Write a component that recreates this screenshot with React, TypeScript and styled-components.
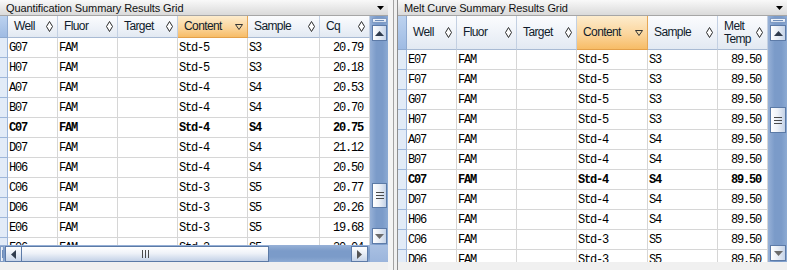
import React from "react";
import styled, { createGlobalStyle, css } from "styled-components";

const Global = createGlobalStyle`
  html, body { margin: 0; padding: 0; background: #f0f0f0; }
  body { width: 787px; height: 270px; overflow: hidden; }
`;

const Page = styled.div`
  display: flex;
  width: 787px;
  height: 270px;
  background: #f0f0f0;
  font-family: "Liberation Sans", Arial, sans-serif;
  overflow: hidden;
`;

const Panel = styled.div<{ $w: number; $framed?: boolean }>`
  width: ${(p) => p.$w}px;
  flex-shrink: 0;
  display: flex;
  flex-direction: column;
  box-sizing: border-box;
  ${(p) =>
    p.$framed &&
    css`
      border-left: 1px solid #8e8e8e;
    `}
`;

const Splitter = styled.div`
  width: 9px;
  flex-shrink: 0;
  background: linear-gradient(to right, #f4f4f4 0, #f4f4f4 5px, #a3a3a3 5px, #a3a3a3 6px, #f0f0f0 6px);
`;

const TitleBar = styled.div`
  height: 15px;
  border-bottom: 1px solid #a6a6a6;
  background: linear-gradient(#f9f9f9, #e6e6e6 60%, #dadada);
  display: flex;
  align-items: center;
  justify-content: space-between;
  padding: 0 4px 0 6px;
  font-size: 11px;
  letter-spacing: -0.1px;
  color: #111;
  white-space: nowrap;
`;

const Body = styled.div<{ $h: number }>`
  display: flex;
  height: ${(p) => p.$h}px;
  flex-shrink: 0;
`;

const GridArea = styled.div<{ $w: number }>`
  width: ${(p) => p.$w}px;
  flex-shrink: 0;
  overflow: hidden;
  background: #fff;
`;

const HeaderRow = styled.div<{ $cols: string; $h: number }>`
  display: grid;
  grid-template-columns: ${(p) => p.$cols};
  height: ${(p) => p.$h}px;
`;

const HeaderCorner = styled.div`
  background: linear-gradient(#bcd2ef, #9fbbe3);
  border-right: 1px solid #8ea9d0;
  border-bottom: 1px solid #8ea9d0;
`;

const HeaderCell = styled.div<{ $active?: boolean }>`
  box-sizing: border-box;
  display: flex;
  align-items: center;
  justify-content: space-between;
  padding: 0 4px 0 6px;
  background: linear-gradient(#fbfcfe, #eef2f8 55%, #e2e9f2);
  border-right: 1px solid #c3d0e2;
  border-bottom: 1px solid #a8bad3;
  font-size: 12px;
  letter-spacing: -0.6px;
  line-height: 13px;
  color: #101c2c;
  ${(p) =>
    p.$active &&
    css`
      background: linear-gradient(#fdeccd, #fbd59c 55%, #f7bc66);
      border-right-color: #e6a755;
      border-bottom-color: #e3a04a;
    `}
`;

const DataRow = styled.div<{ $cols: string }>`
  display: grid;
  grid-template-columns: ${(p) => p.$cols};
  height: 20px;
`;

const RowMarker = styled.div`
  background: #e2ebf7;
  border-right: 1px solid #9db6da;
  border-bottom: 1px solid #9db6da;
`;

const Cell = styled.div<{ $right?: boolean; $bold?: boolean }>`
  box-sizing: border-box;
  display: flex;
  align-items: center;
  justify-content: ${(p) => (p.$right ? "flex-end" : "flex-start")};
  padding: ${(p) => (p.$right ? "0 6px 0 0" : "0 0 0 1px")};
  border-right: 1px solid #d6d6d6;
  border-bottom: 1px solid #d6d6d6;
  font-family: "Liberation Mono", "Courier New", monospace;
  font-size: 12px;
  letter-spacing: -1.2px;
  font-weight: ${(p) => (p.$bold ? 700 : 400)};
  color: #000;
  white-space: nowrap;
`;

const VScroll = styled.div<{ $w: number }>`
  width: ${(p) => p.$w}px;
  flex-shrink: 0;
  box-sizing: border-box;
  display: flex;
  flex-direction: column;
  padding: 2px 1px 1px 2px;
  background: linear-gradient(to right, #97b1d7, #7b9bc9 35%, #7b9bc9 70%, #8caad3);
`;

const Grip = styled.div`
  height: 5px;
  flex-shrink: 0;
  box-sizing: border-box;
  border: 1px solid #7f9bc4;
  background: linear-gradient(#f4f7fc, #d3deee);
  position: relative;
  &::after {
    content: "";
    position: absolute;
    left: 2px;
    right: 2px;
    top: 1px;
    height: 1px;
    background: #6e8cb8;
  }
`;

const VButton = styled.div`
  height: 16px;
  flex-shrink: 0;
  box-sizing: border-box;
  margin-top: 2px;
  border: 1px solid #5d7ba8;
  background: linear-gradient(to right, #ffffff, #e9eef6 45%, #c6d4e8);
  display: flex;
  align-items: center;
  justify-content: center;
`;

const VTrack = styled.div`
  flex: 1;
  display: flex;
  flex-direction: column;
`;

const VThumb = styled.div<{ $h: number }>`
  height: ${(p) => p.$h}px;
  box-sizing: border-box;
  border: 1px solid #5b7aa6;
  background: linear-gradient(to right, #ffffff, #eef2f8 45%, #c4d2e7);
  display: flex;
  align-items: center;
  justify-content: center;
`;

const HBarRow = styled.div`
  display: flex;
  height: 17px;
  flex-shrink: 0;
`;

const HScroll = styled.div<{ $w: number }>`
  width: ${(p) => p.$w}px;
  box-sizing: border-box;
  display: flex;
  padding: 1px 2px 0 0;
  background: linear-gradient(#97b1d7, #7b9bc9 35%, #7b9bc9 70%, #8caad3);
`;

const HGrip = styled.div`
  width: 4px;
  margin-right: 1px;
  box-sizing: border-box;
  border: 1px solid #7f9bc4;
  background: linear-gradient(to right, #f4f7fc, #d3deee);
  position: relative;
  &::after {
    content: "";
    position: absolute;
    top: 3px;
    bottom: 3px;
    left: 1px;
    width: 1px;
    background: #6e8cb8;
  }
`;

const HButton = styled.div`
  width: 17px;
  flex-shrink: 0;
  box-sizing: border-box;
  border: 1px solid #5d7ba8;
  background: linear-gradient(#ffffff, #e9eef6 45%, #c6d4e8);
  display: flex;
  align-items: center;
  justify-content: center;
`;

const HTrack = styled.div`
  flex: 1;
  display: flex;
`;

const HThumb = styled.div<{ $w: number }>`
  width: ${(p) => p.$w}px;
  box-sizing: border-box;
  border: 1px solid #5b7aa6;
  border-left: none;
  background: linear-gradient(#ffffff, #eef2f8 45%, #c4d2e7);
  display: flex;
  align-items: center;
  justify-content: center;
`;

const Corner = styled.div`
  flex: 1;
  background: linear-gradient(#a9c0e2, #9bb5dc);
`;

const Diamond = () => (
  <svg width="7" height="11" viewBox="0 0 7 11">
    <path d="M3.5 0.5 L6.5 5.5 L3.5 10.5 L0.5 5.5 Z" fill="#fff" stroke="#2a2a2a" strokeWidth="1" />
  </svg>
);

const SortDown = () => (
  <svg width="8" height="6" viewBox="0 0 8 6">
    <path d="M0.5 0.5 H7.5 L4 5.5 Z" fill="#f3d9a8" stroke="#333" strokeWidth="1" />
  </svg>
);

const DropArrow = () => (
  <svg width="7" height="4" viewBox="0 0 7 4">
    <path d="M0 0 H7 L3.5 4 Z" fill="#000" />
  </svg>
);

const Arrow = ({ dir, color = "#2f3b4c" }: { dir: "up" | "down" | "left" | "right"; color?: string }) => {
  const d =
    dir === "up"
      ? "M0 5 L4.5 0 L9 5 Z"
      : dir === "down"
      ? "M0 0 L9 0 L4.5 5 Z"
      : dir === "left"
      ? "M5 0 L5 9 L0 4.5 Z"
      : "M0 0 L0 9 L5 4.5 Z";
  const vertical = dir === "up" || dir === "down";
  return (
    <svg width={vertical ? 9 : 5} height={vertical ? 5 : 9} viewBox={vertical ? "0 0 9 5" : "0 0 5 9"}>
      <path d={d} fill={color} />
    </svg>
  );
};

const GripLinesV = () => (
  <svg width="8" height="7" viewBox="0 0 8 7">
    <path d="M0 0.5 H8 M0 3.5 H8 M0 6.5 H8" stroke="#4a4a4a" strokeWidth="1" />
  </svg>
);

const GripLinesH = () => (
  <svg width="7" height="8" viewBox="0 0 7 8">
    <path d="M0.5 0 V8 M3.5 0 V8 M6.5 0 V8" stroke="#4a4a4a" strokeWidth="1" />
  </svg>
);

type Row = { well: string; content: string; sample: string; value: string; bold?: boolean };

const leftRows: Row[] = [
  { well: "G07", content: "Std-5", sample: "S3", value: "20.79" },
  { well: "H07", content: "Std-5", sample: "S3", value: "20.18" },
  { well: "A07", content: "Std-4", sample: "S4", value: "20.53" },
  { well: "B07", content: "Std-4", sample: "S4", value: "20.70" },
  { well: "C07", content: "Std-4", sample: "S4", value: "20.75", bold: true },
  { well: "D07", content: "Std-4", sample: "S4", value: "21.12" },
  { well: "H06", content: "Std-4", sample: "S4", value: "20.50" },
  { well: "C06", content: "Std-3", sample: "S5", value: "20.77" },
  { well: "D06", content: "Std-3", sample: "S5", value: "20.26" },
  { well: "E06", content: "Std-3", sample: "S5", value: "19.68" },
  { well: "F06", content: "Std-3", sample: "S5", value: "20.04" },
];

const rightRows: Row[] = [
  { well: "E07", content: "Std-5", sample: "S3", value: "89.50" },
  { well: "F07", content: "Std-5", sample: "S3", value: "89.50" },
  { well: "G07", content: "Std-5", sample: "S3", value: "89.50" },
  { well: "H07", content: "Std-5", sample: "S3", value: "89.50" },
  { well: "A07", content: "Std-4", sample: "S4", value: "89.50" },
  { well: "B07", content: "Std-4", sample: "S4", value: "89.50" },
  { well: "C07", content: "Std-4", sample: "S4", value: "89.50", bold: true },
  { well: "D07", content: "Std-4", sample: "S4", value: "89.50" },
  { well: "H06", content: "Std-4", sample: "S4", value: "89.50" },
  { well: "C06", content: "Std-3", sample: "S5", value: "89.50" },
  { well: "D06", content: "Std-3", sample: "S5", value: "89.50" },
];

const Grid = ({
  cols,
  headerH,
  lastHeader,
  rows,
}: {
  cols: string;
  headerH: number;
  lastHeader: React.ReactNode;
  rows: Row[];
}) => (
  <>
    <HeaderRow $cols={cols} $h={headerH}>
      <HeaderCorner />
      <HeaderCell>
        <span>Well</span>
        <Diamond />
      </HeaderCell>
      <HeaderCell>
        <span>Fluor</span>
        <Diamond />
      </HeaderCell>
      <HeaderCell>
        <span>Target</span>
        <Diamond />
      </HeaderCell>
      <HeaderCell $active>
        <span>Content</span>
        <SortDown />
      </HeaderCell>
      <HeaderCell>
        <span>Sample</span>
        <Diamond />
      </HeaderCell>
      <HeaderCell>
        <span>{lastHeader}</span>
        <Diamond />
      </HeaderCell>
    </HeaderRow>
    {rows.map((r) => (
      <DataRow $cols={cols} key={r.well}>
        <RowMarker />
        <Cell $bold={r.bold}>{r.well}</Cell>
        <Cell $bold={r.bold}>FAM</Cell>
        <Cell />
        <Cell $bold={r.bold}>{r.content}</Cell>
        <Cell $bold={r.bold}>{r.sample}</Cell>
        <Cell $right $bold={r.bold}>
          {r.value}
        </Cell>
      </DataRow>
    ))}
  </>
);

const VerticalScroll = ({ w, trackOffset, thumbH }: { w: number; trackOffset: number; thumbH: number }) => (
  <VScroll $w={w}>
    <Grip />
    <VButton>
      <Arrow dir="up" />
    </VButton>
    <VTrack>
      <VThumb $h={thumbH} style={{ marginTop: trackOffset }}>
        <GripLinesV />
      </VThumb>
    </VTrack>
    <VButton>
      <Arrow dir="down" color="#6b6b6b" />
    </VButton>
  </VScroll>
);

export default function App() {
  const leftCols = "8px 50px 60px 60px 70px 72px 50px";
  const rightCols = "9px 50px 60px 60px 71px 70px 50px";
  return (
    <Page>
      <Global />
      <Panel $w={388}>
        <TitleBar>
          <span>Quantification Summary Results Grid</span>
          <DropArrow />
        </TitleBar>
        <Body $h={229}>
          <GridArea $w={370}>
            <Grid cols={leftCols} headerH={22} lastHeader="Cq" rows={leftRows} />
          </GridArea>
          <VerticalScroll w={18} trackOffset={142} thumbH={25} />
        </Body>
        <HBarRow>
          <HScroll $w={370}>
            <HGrip />
            <HButton>
              <Arrow dir="left" />
            </HButton>
            <HTrack>
              <HThumb $w={247}>
                <GripLinesH />
              </HThumb>
            </HTrack>
            <HButton>
              <Arrow dir="right" color="#555" />
            </HButton>
          </HScroll>
          <Corner />
        </HBarRow>
      </Panel>
      <Splitter />
      <Panel $w={390} $framed>
        <TitleBar>
          <span>Melt Curve Summary Results Grid</span>
          <DropArrow />
        </TitleBar>
        <Body $h={246}>
          <GridArea $w={370}>
            <Grid
              cols={rightCols}
              headerH={34}
              lastHeader={
                <>
                  Melt
                  <br />
                  Temp
                </>
              }
              rows={rightRows}
            />
          </GridArea>
          <VerticalScroll w={19} trackOffset={66} thumbH={26} />
        </Body>
      </Panel>
    </Page>
  );
}
